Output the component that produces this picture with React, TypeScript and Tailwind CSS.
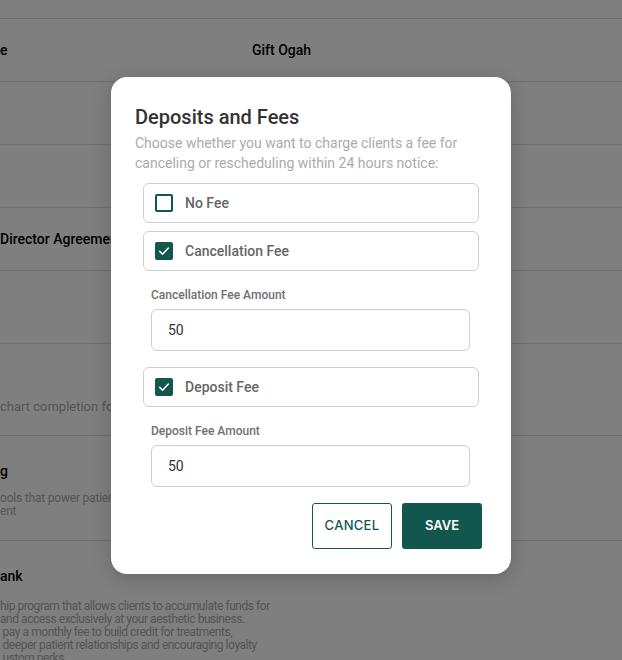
import React from 'react';

function CheckBox({ checked }: { checked: boolean }) {
  return (
    <span
      className={`flex h-[18px] w-[18px] shrink-0 items-center justify-center rounded-[2px] border-2 border-[#12574d] ${
        checked ? 'bg-[#12574d]' : 'bg-white'
      }`}
    >
      {checked && (
        <svg viewBox="0 0 24 24" className="h-[14px] w-[14px]" fill="none" stroke="white" strokeWidth="2.6" strokeLinecap="round" strokeLinejoin="round">
          <path d="M4.5 12.5l5 5L19.5 7" />
        </svg>
      )}
    </span>
  );
}

function FeeOption({ label, checked }: { label: string; checked: boolean }) {
  return (
    <label className="mx-2 flex h-10 items-center gap-3 rounded-md border border-[#cfcfcf] pl-[11px]">
      <CheckBox checked={checked} />
      <span className="text-[14px] font-medium text-[#666]">{label}</span>
    </label>
  );
}

function AmountField({ label, value }: { label: string; value: string }) {
  return (
    <div className="ml-4 mt-4 w-[319px]">
      <div className="text-[12px] font-medium leading-4 text-[#707070]">{label}</div>
      <div className="mt-[6px] flex h-[42px] items-center rounded-md border border-[#cfcfcf] px-4 text-[14px] text-[#333]">
        {value}
      </div>
    </div>
  );
}

export default function App() {
  return (
    <div className="relative h-[660px] w-[622px] overflow-hidden bg-white font-['Roboto',sans-serif]">
      {/* Page behind the dialog */}
      <div className="flex flex-col">
        <div className="h-[19px] border-b border-[#dcdcdc]" />
        <div className="grid h-[63px] grid-cols-[252px_1fr] items-center border-b border-[#dcdcdc] text-[14px] font-medium text-black">
          <span>e</span>
          <span>Gift Ogah</span>
        </div>
        <div className="h-[63px] border-b border-[#dcdcdc]" />
        <div className="h-[63px] border-b border-[#dcdcdc]" />
        <div className="flex h-[63px] items-center border-b border-[#dcdcdc] text-[14px] font-medium text-black">
          Director Agreement
        </div>
        <div className="h-[73px] border-b border-[#dcdcdc]" />
        <div className="flex h-[92px] flex-col justify-end border-b border-[#dcdcdc] pb-[19px] text-[13px] text-[#aaa]">
          chart completion for every appointment
        </div>
        <div className="flex h-[105px] flex-col border-b border-[#dcdcdc] pt-[26px]">
          <span className="text-[14px] font-medium leading-[18px] text-black">g</span>
          <div className="mt-[12px] text-[12px] leading-[13px] tracking-[-0.2px] text-[#aaa]">
            <div>ools that power patient</div>
            <div>ent</div>
          </div>
        </div>
        <div className="flex flex-col pt-[26px]">
          <span className="text-[14px] font-medium leading-[18px] text-black">ank</span>
          <div className="mt-[15px] text-[12px] leading-[13px] tracking-[-0.45px] text-[#aaa]">
            <div>hip program that allows clients to accumulate funds for</div>
            <div>and access exclusively at your aesthetic business.</div>
            <div>&nbsp;pay a monthly fee to build credit for treatments,</div>
            <div>&nbsp;deeper patient relationships and encouraging loyalty</div>
            <div>&nbsp;ustom perks.</div>
          </div>
        </div>
      </div>

      {/* Overlay */}
      <div className="absolute inset-0 flex justify-center bg-black/50 pt-[77px]">
        <div className="h-fit w-[400px] rounded-2xl bg-white px-6 pb-[25px] pt-[26px] shadow-[0_4px_20px_rgba(0,0,0,0.2)]">
          <h2 className="text-[20px] font-medium leading-7 text-[#333]">Deposits and Fees</h2>
          <p className="mt-[2px] text-[14px] leading-5 text-[#ababab]">
            Choose whether you want to charge clients a fee for canceling or rescheduling within 24 hours notice:
          </p>

          <div className="mt-[10px] flex flex-col gap-2">
            <FeeOption label="No Fee" checked={false} />
            <FeeOption label="Cancellation Fee" checked />
          </div>
          <AmountField label="Cancellation Fee Amount" value="50" />

          <div className="mt-4">
            <FeeOption label="Deposit Fee" checked />
          </div>
          <AmountField label="Deposit Fee Amount" value="50" />

          <div className="mr-[5px] mt-4 flex justify-end gap-[10px] font-['Inter',sans-serif]">
            <button className="h-[46px] w-20 rounded-[3px] border border-[#12574d] text-[13px] font-medium tracking-[0.3px] text-[#12574d]">
              CANCEL
            </button>
            <button className="h-[46px] w-20 rounded-[3px] bg-[#12574d] text-[13px] font-semibold text-white">
              SAVE
            </button>
          </div>
        </div>
      </div>
    </div>
  );
}
